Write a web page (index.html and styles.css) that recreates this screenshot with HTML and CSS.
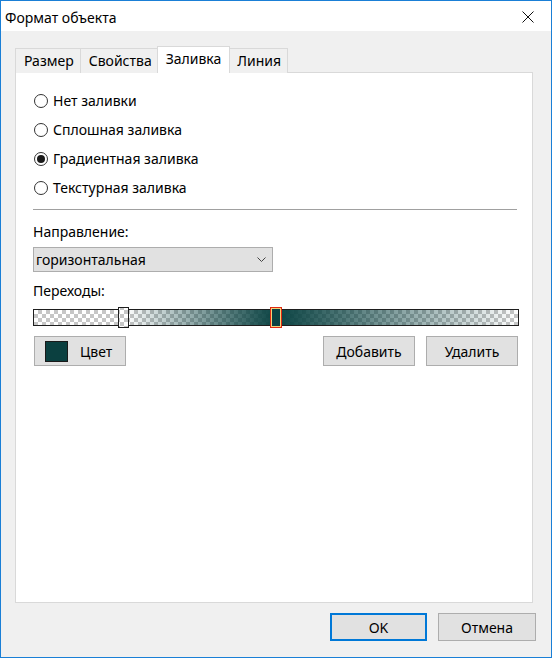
FILE: index.html
```html
<!DOCTYPE html>
<html lang="ru">
<head>
<meta charset="utf-8">
<title>Формат объекта</title>
<link rel="stylesheet" href="styles.css">
</head>
<body>
<div class="window">
  <div class="titlebar">
    <span class="title">Формат объекта</span>
    <svg class="close" width="12" height="12" viewBox="0 0 12 12"><path d="M0.5 0.5L11.5 11.5M11.5 0.5L0.5 11.5" stroke="#111" stroke-width="1"/></svg>
  </div>
  <div class="client">
    <div class="tabs">
      <div class="tab">Размер</div>
      <div class="tab">Свойства</div>
      <div class="tab active">Заливка</div>
      <div class="tab">Линия</div>
    </div>
    <div class="panel">
      <div class="radios">
        <label class="radio"><span class="dot"></span>Нет заливки</label>
        <label class="radio"><span class="dot"></span>Сплошная заливка</label>
        <label class="radio"><span class="dot checked"></span>Градиентная заливка</label>
        <label class="radio"><span class="dot"></span>Текстурная заливка</label>
      </div>
      <div class="sep"></div>
      <div class="label lbl-dir">Направление:</div>
      <div class="select">
        <span>горизонтальная</span>
        <svg width="9" height="5" viewBox="0 0 9 5"><path d="M0.5 0.5L4.5 4.5L8.5 0.5" fill="none" stroke="#444" stroke-width="1"/></svg>
      </div>
      <div class="label lbl-tr">Переходы:</div>
      <div class="gradbar">
        <div class="gradfill"></div>
        <div class="stop stop-left"></div>
        <div class="stop stop-right"></div>
      </div>
      <div class="btnrow">
        <button class="btn btn-color"><span class="swatch"></span>Цвет</button>
        <div class="spacer"></div>
        <button class="btn">Добавить</button>
        <button class="btn">Удалить</button>
      </div>
    </div>
    <div class="footer">
      <button class="btn dlg default">OK</button>
      <button class="btn dlg">Отмена</button>
    </div>
  </div>
</div>
</body>
</html>
```

FILE: styles.css
```css
* { box-sizing: border-box; }
html, body { margin: 0; padding: 0; }
body {
  width: 552px;
  height: 658px;
  font-family: "Noto Sans", "Open Sans", sans-serif;
  font-size: 14px;
  color: #000;
  background: #f0f0f0;
}
.window {
  width: 552px;
  height: 658px;
  border: 1px solid #1a7fd6;
  display: flex;
  flex-direction: column;
  background: #f0f0f0;
}
.titlebar {
  height: 30px;
  background: #fff;
  display: flex;
  align-items: center;
  padding-left: 4px;
  padding-right: 17px;
  flex: none;
}
.title {
  font-size: 14px;
  flex: 1;
  position: relative;
  top: 1px;
}
.close { display: block; position: relative; top: 1px; }
.client {
  flex: 1;
  display: flex;
  flex-direction: column;
  padding: 15px 18px 0 14px;
}
.tabs {
  display: flex;
  align-items: flex-end;
  height: 27px;
  position: relative;
  z-index: 1;
  margin-bottom: -1px;
}
.tab {
  height: 25px;
  padding: 0 6px 0 8px;
  border: 1px solid #d9d9d9;
  border-bottom: none;
  margin-left: -1px;
  background: #f0f0f0;
  display: flex;
  align-items: center;
  line-height: 1;
}
.tab:first-child { margin-left: 0; }
.tab.active {
  height: 27px;
  background: #fff;
  border-color: #d9d9d9;
  padding: 0 8px 3px 8px;
  margin-left: -2px;
  margin-right: -1px;
  position: relative;
  z-index: 2;
}
.panel {
  height: 531px;
  background: #fff;
  border: 1px solid #d9d9d9;
  padding: 13px 15px 0 17px;
  display: flex;
  flex-direction: column;
}
.radios {
  display: flex;
  flex-direction: column;
}
.radio {
  height: 29px;
  display: flex;
  align-items: center;
  gap: 5px;
}
.dot {
  width: 14px;
  height: 14px;
  border: 1px solid #333;
  border-radius: 50%;
  background: #fff;
  margin-left: 1px;
  display: flex;
  align-items: center;
  justify-content: center;
}
.dot.checked::after {
  content: "";
  width: 8px;
  height: 8px;
  border-radius: 50%;
  background: #1a1a1a;
}
.sep {
  height: 1px;
  background: #a0a0a0;
  margin-top: 7px;
}
.label { line-height: 18px; }
.lbl-dir { margin-top: 13px; }
.select {
  margin-top: 6px;
  width: 240px;
  height: 25px;
  border: 1px solid #adadad;
  background: #e1e1e1;
  display: flex;
  align-items: center;
  justify-content: space-between;
  padding: 0 6px 0 2px;
}
.select svg { display: block; }
.lbl-tr { margin-top: 10px; }
.gradbar {
  margin-top: 9px;
  width: 486px;
  height: 17px;
  border: 1px solid #1e1e1e;
  position: relative;
  background-color: #fff;
  background-image: conic-gradient(#c6c6c6 25%, #fff 0 50%, #c6c6c6 0 75%, #fff 0);
  background-size: 8px 8px;
}
.gradfill {
  position: absolute;
  inset: 0;
  background: linear-gradient(to right, rgba(11,67,67,0) 0%, rgba(11,67,67,0) 18.8%, rgba(11,67,67,1) 50%, rgba(11,67,67,0) 100%);
}
.stop {
  position: absolute;
  top: -3px;
  width: 11px;
  height: 21px;
  border: 1px solid #1e1e1e;
}
.stop-left {
  left: 84px;
  background-color: #fff;
  background-image: conic-gradient(#c6c6c6 25%, #fff 0 50%, #c6c6c6 0 75%, #fff 0);
  background-size: 8px 8px;
  background-position: 1px 2px;
}
.stop-right {
  left: 236px;
  width: 12px;
  border: 1px solid #e02a10;
  box-shadow: inset 0 0 0 1px #f4d27a;
  background: #0b4343;
}
.btnrow {
  margin-top: 10px;
  display: flex;
  gap: 11px;
  padding-left: 1px;
  padding-right: 0;
  width: 485px;
}
.spacer { flex: 1; }
.btn {
  font: inherit;
  height: 30px;
  width: 92px;
  border: 1px solid #adadad;
  background: #e1e1e1;
  color: #000;
  padding: 0;
  display: flex;
  align-items: center;
  justify-content: center;
}
.btn-color {
  justify-content: flex-start;
  padding-left: 10px;
  gap: 12px;
}
.swatch {
  width: 23px;
  height: 21px;
  background: #0b4040;
  border: 1px solid #1a1a1a;
}
.footer {
  display: flex;
  justify-content: flex-end;
  gap: 11px;
  margin-top: 10px;
  margin-right: -3px;
}
.dlg {
  height: 28px;
  width: 97px;
}
.dlg + .dlg { width: 98px; }
.default {
  border: 2px solid #0078d7;
}
```
